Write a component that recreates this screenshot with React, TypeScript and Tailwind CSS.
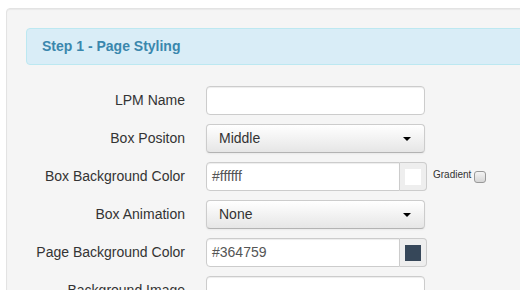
import React from "react";

const font = { fontFamily: '"Liberation Sans", Arial, sans-serif' };

function Caret() {
  return <span className="ml-auto w-0 h-0 border-l-[4px] border-r-[4px] border-t-[4px] border-l-transparent border-r-transparent border-t-black" />;
}

function Row({ label, children }: { label: string; children: React.ReactNode }) {
  return (
    <div className="flex items-center h-[29px]">
      <label className="w-[159px] text-right text-[14px] text-[#333] pr-0">{label}</label>
      <div className="ml-[21px] flex items-center h-full">{children}</div>
    </div>
  );
}

function TextBox({ value = "" }: { value?: string }) {
  return (
    <div className="w-[219px] h-[29px] bg-white border border-[#ccc] rounded-[4px] shadow-[inset_0_1px_1px_rgba(0,0,0,0.075)] px-[5px] flex items-center text-[14px] text-[#555]">
      {value}
    </div>
  );
}

function Select({ value }: { value: string }) {
  return (
    <div className="w-[219px] h-[29px] rounded-[4px] border border-[#ccc] border-b-[#b3b3b3] bg-gradient-to-b from-white to-[#e6e6e6] shadow-[inset_0_1px_0_rgba(255,255,255,0.2),0_1px_2px_rgba(0,0,0,0.05)] pl-[12px] pr-[13px] flex items-center text-[14px] text-[#333]">
      {value}
      <Caret />
    </div>
  );
}

function ColorBox({ value, swatch }: { value: string; swatch: string }) {
  return (
    <div className="flex h-[29px]">
      <div className="w-[194px] h-full bg-white border border-[#ccc] rounded-l-[4px] shadow-[inset_0_1px_1px_rgba(0,0,0,0.075)] px-[5px] flex items-center text-[14px] text-[#555]">
        {value}
      </div>
      <div className="w-[27px] h-full bg-[#eee] border border-l-0 border-[#ccc] rounded-r-[4px] flex items-center justify-center">
        <span className="w-[16px] h-[16px] block" style={{ backgroundColor: swatch }} />
      </div>
    </div>
  );
}

function Check() {
  return <span className="block w-[12px] h-[12px] rounded-[3px] border border-[#999] bg-gradient-to-b from-[#f4f4f4] to-[#d6d6d6]" />;
}

export default function App() {
  return (
    <div className="w-[520px] h-[290px] overflow-hidden bg-white" style={font}>
      <div className="ml-[6px] mt-[8px] w-[600px] h-[400px] bg-[#f5f5f5] border border-[#e3e3e3] rounded-[4px] shadow-[inset_0_1px_1px_rgba(0,0,0,0.05)] p-[19px]">
        <div className="h-[37px] bg-[#d9edf7] border border-[#bce8f1] rounded-[4px] pl-[15px] flex items-center text-[14px] font-bold text-[#3a87ad]">
          Step 1 - Page Styling
        </div>
        <div className="mt-[21px] flex flex-col gap-[9px]">
          <Row label="LPM Name">
            <TextBox />
          </Row>
          <Row label="Box Positon">
            <Select value="Middle" />
          </Row>
          <Row label="Box Background Color">
            <ColorBox value="#ffffff" swatch="#ffffff" />
            <span className="ml-[6px] -mt-[4px] text-[10px] text-[#333]">Gradient</span>
            <span className="ml-[3px]"><Check /></span>
          </Row>
          <Row label="Box Animation">
            <Select value="None" />
          </Row>
          <Row label="Page Background Color">
            <ColorBox value="#364759" swatch="#364759" />
          </Row>
          <Row label="Background Image">
            <TextBox />
            <span className="ml-[8px] mt-[14px] text-[10px] text-[#333]">Tile</span>
            <span className="ml-[3px] mt-[14px]"><Check /></span>
          </Row>
        </div>
      </div>
    </div>
  );
}
